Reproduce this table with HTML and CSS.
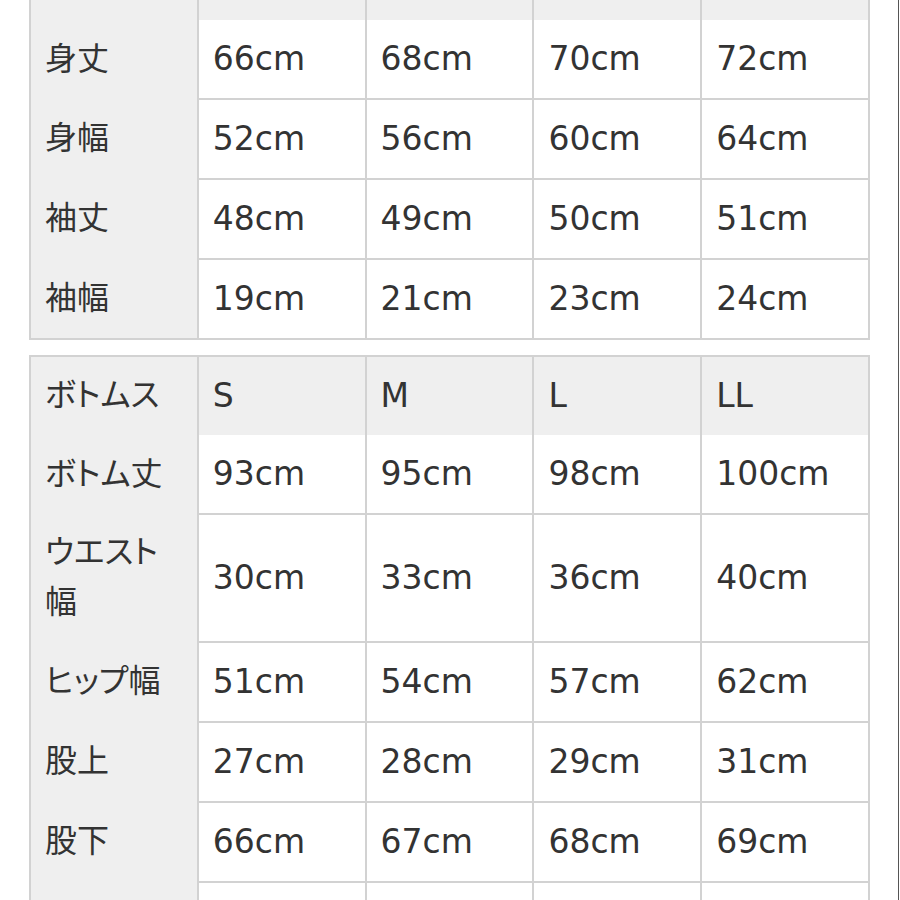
FILE: index.html
```html
<!DOCTYPE html>
<html lang="ja">
<head>
<meta charset="utf-8">
<title>サイズ表</title>
<link rel="stylesheet" href="styles.css">
</head>
<body>
<div class="page">
  <table class="size-table tops">
    <colgroup><col><col><col><col><col></colgroup>
    <thead>
      <tr><th class="label"></th><th></th><th></th><th></th><th></th></tr>
    </thead>
    <tbody>
      <tr class="first"><th class="label">身丈</th><td>66cm</td><td>68cm</td><td>70cm</td><td>72cm</td></tr>
      <tr><th class="label">身幅</th><td>52cm</td><td>56cm</td><td>60cm</td><td>64cm</td></tr>
      <tr><th class="label">袖丈</th><td>48cm</td><td>49cm</td><td>50cm</td><td>51cm</td></tr>
      <tr><th class="label">袖幅</th><td>19cm</td><td>21cm</td><td>23cm</td><td>24cm</td></tr>
    </tbody>
  </table>

  <table class="size-table bottoms">
    <colgroup><col><col><col><col><col></colgroup>
    <thead>
      <tr><th class="label">ボトムス</th><th>S</th><th>M</th><th>L</th><th>LL</th></tr>
    </thead>
    <tbody>
      <tr class="first"><th class="label">ボトム丈</th><td>93cm</td><td>95cm</td><td>98cm</td><td>100cm</td></tr>
      <tr><th class="label">ウエスト幅</th><td>30cm</td><td>33cm</td><td>36cm</td><td>40cm</td></tr>
      <tr><th class="label">ヒップ幅</th><td>51cm</td><td>54cm</td><td>57cm</td><td>62cm</td></tr>
      <tr><th class="label">股上</th><td>27cm</td><td>28cm</td><td>29cm</td><td>31cm</td></tr>
      <tr><th class="label">股下</th><td>66cm</td><td>67cm</td><td>68cm</td><td>69cm</td></tr>
      <tr><th class="label"></th><td></td><td></td><td></td><td></td></tr>
    </tbody>
  </table>
</div>
</body>
</html>
```

FILE: styles.css
```css
html, body {
  margin: 0;
  padding: 0;
  background: #fff;
}

.page {
  box-sizing: border-box;
  width: 899px;
  height: 900px;
  overflow: hidden;
  border-right: 1px solid #555;
  padding-left: 29px;
  color: #333;
  font-family: "DejaVu Sans", "Noto Sans CJK JP", sans-serif;
}

.size-table {
  width: 841px;
  table-layout: fixed;
  border-collapse: collapse;
  border: 2px solid #d2d2d2;
}

.size-table.tops {
  margin-top: -60px;
}

.size-table.bottoms {
  margin-top: 15px;
}

.size-table th,
.size-table td {
  height: 50px;
  padding: 14px 14px;
  line-height: 50px;
  font-size: 33px;
  font-weight: normal;
  text-align: left;
  vertical-align: middle;
  border-left: 2px solid #d2d2d2;
  border-right: 2px solid #d2d2d2;
  background: #fff;
}

.size-table thead th {
  background: #efefef;
}

.size-table th.label {
  background: #efefef;
  font-family: "Noto Sans CJK JP", sans-serif;
  font-size: 32px;
  font-feature-settings: "palt";
  padding-top: 10px;
  padding-bottom: 18px;
}

.size-table tbody td {
  border-top: 2px solid #d2d2d2;
}

.size-table tbody tr.first td {
  border-top: none;
}
```
